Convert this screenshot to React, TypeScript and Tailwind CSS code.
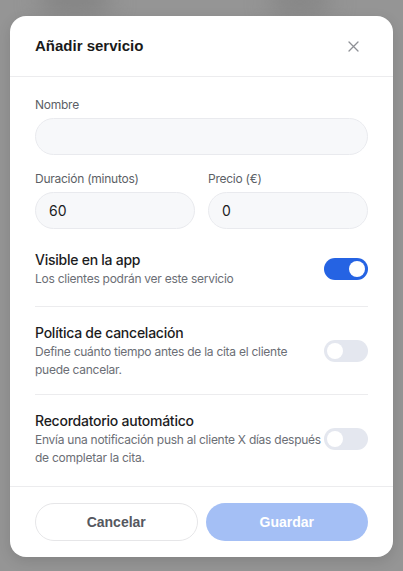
import React from "react";

function Toggle({ on }: { on: boolean }) {
  return (
    <div
      className={
        on
          ? "w-[44px] h-[22px] rounded-full bg-[#2563e3] flex items-center justify-end px-[3px] shrink-0"
          : "w-[44px] h-[22px] rounded-full bg-[#e4e7ef] flex items-center justify-start px-[3px] shrink-0"
      }
    >
      <div className="w-[16px] h-[16px] rounded-full bg-white" />
    </div>
  );
}

function Row({ title, sub, on }: { title: string; sub: string; on: boolean }) {
  return (
    <div className="flex items-center justify-between">
      <div className="flex-1">
        <div className="text-[14px] leading-[20px] text-[#1c1c1e] font-medium tracking-[-0.25px]">{title}</div>
        <div className="text-[12px] leading-[18px] text-[#6b6e75] tracking-[-0.26px]">{sub}</div>
      </div>
      <Toggle on={on} />
    </div>
  );
}

export default function App() {
  return (
    <div
      className="relative w-[403px] h-[571px] bg-[#959595] overflow-hidden"
      style={{ fontFamily: "Inter, 'Noto Sans', sans-serif" }}
    >
      <div className="absolute left-[40px] top-[-10px] w-[70px] h-[22px] rounded-full bg-[#7f7f7f] blur-md" />
      <div className="absolute left-[270px] top-[-8px] w-[60px] h-[20px] rounded-full bg-[#808080] blur-md" />
      <div className="relative pt-[16px]">
        <div className="mx-auto w-[383px] bg-white rounded-[16px] shadow-[0_4px_14px_rgba(0,0,0,0.12)] overflow-hidden">
          <div className="h-[61px] flex items-center justify-between pl-[25px] pr-[34px] border-b border-[#ececee]">
            <h2
              className="text-[15px] font-bold text-[#1a1a1a]"
              style={{ fontFamily: "'Liberation Sans', Arial, sans-serif" }}
            >
              Añadir servicio
            </h2>
            <svg width="11" height="11" viewBox="0 0 11 11" className="text-[#8e9096]">
              <path d="M1 1L10 10M10 1L1 10" stroke="currentColor" strokeWidth="1.3" strokeLinecap="round" />
            </svg>
          </div>

          <div className="px-[25px] pt-[20px] pb-[19px]">
            <div className="text-[12px] leading-[16px] text-[#5c5f66] tracking-[-0.25px]">Nombre</div>
            <div className="mt-[5px] h-[37px] rounded-full bg-[#f7f8fa] border border-[#e9eaee]" />

            <div className="mt-[16px] grid grid-cols-2 gap-[13px]">
              <div>
                <div className="text-[12px] leading-[16px] text-[#5c5f66] tracking-[-0.25px]">Duración (minutos)</div>
                <div className="mt-[5px] h-[37px] rounded-full bg-[#f7f8fa] border border-[#e9eaee] flex items-center pl-[13px] text-[14px] text-[#1c1c1e]">
                  60
                </div>
              </div>
              <div>
                <div className="text-[12px] leading-[16px] text-[#5c5f66] tracking-[-0.25px]">Precio (€)</div>
                <div className="mt-[5px] h-[37px] rounded-full bg-[#f7f8fa] border border-[#e9eaee] flex items-center pl-[13px] text-[14px] text-[#1c1c1e]">
                  0
                </div>
              </div>
            </div>

            <div className="mt-[21px] pb-[18px] border-b border-[#ececee]">
              <Row title="Visible en la app" sub="Los clientes podrán ver este servicio" on={true} />
            </div>
            <div className="pt-[16px] pb-[15px] border-b border-[#ececee]">
              <Row
                title="Política de cancelación"
                sub="Define cuánto tiempo antes de la cita el cliente puede cancelar."
                on={false}
              />
            </div>
            <div className="pt-[16px]">
              <Row
                title="Recordatorio automático"
                sub="Envía una notificación push al cliente X días después de completar la cita."
                on={false}
              />
            </div>
          </div>

          <div
            className="border-t border-[#ececee] px-[25px] pt-[16px] pb-[16px] grid grid-cols-2 gap-[8px]"
            style={{ fontFamily: "'Liberation Sans', Arial, sans-serif" }}
          >
            <button className="h-[38px] rounded-full border border-[#e6e6e8] bg-white text-[14px] font-semibold text-[#55585f]">
              Cancelar
            </button>
            <button className="h-[38px] rounded-full bg-[#a4bff5] text-[14px] font-bold text-white">
              Guardar
            </button>
          </div>
        </div>
      </div>
    </div>
  );
}
